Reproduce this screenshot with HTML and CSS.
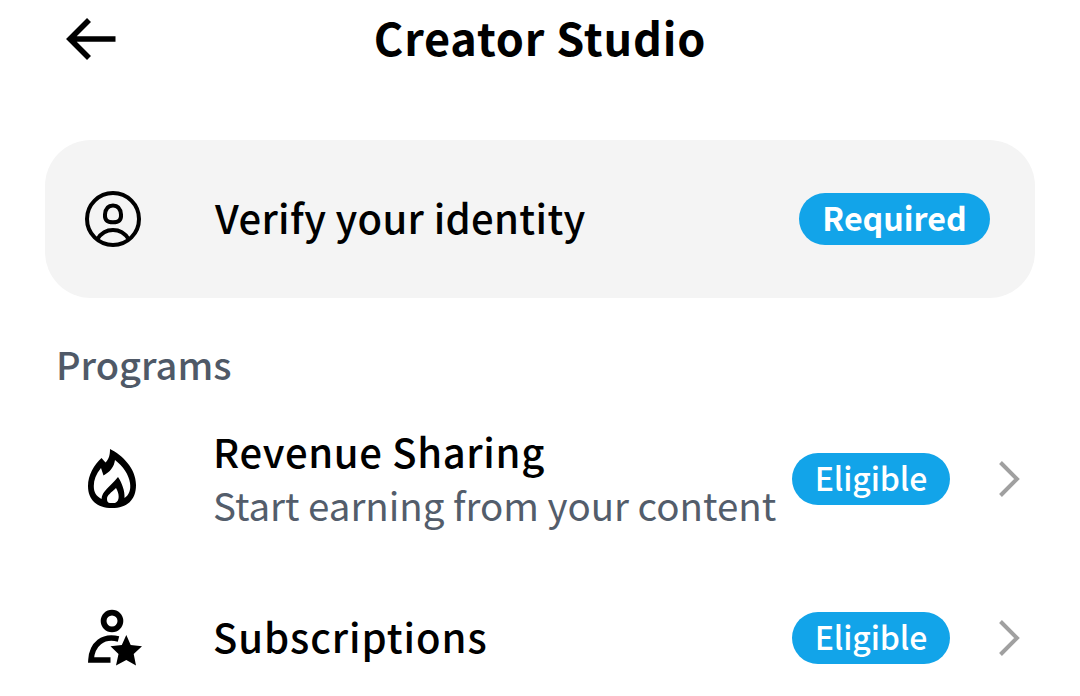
FILE: index.html
```
<!DOCTYPE html>
<html lang="en">
<head>
  <meta charset="UTF-8">
  <title>Creator Studio</title>
  <link rel="stylesheet" href="styles.css">
</head>
<body>
  <header class="topbar">
    <svg class="back" viewBox="0 0 52 44" width="52" height="44">
      <path d="M24 3 L5 22 L24 41 M5 22 H50.500" fill="none" stroke="#000" stroke-width="5.600"/>
    </svg>
    <h1>Creator Studio</h1>
  </header>

  <section class="card">
    <svg class="icon" viewBox="0 0 60 60" width="60" height="60">
      <circle cx="30" cy="30" r="26" fill="none" stroke="#000" stroke-width="4"/>
      <path d="M30 16.500 C35.500 16.500 37.500 20 38 25.500 C38.400 31 36 33.300 30 33.300 C24 33.300 21.600 31 22 25.500 C22.500 20 24.500 16.500 30 16.500 Z M14.500 50 C22 38 38 38 45.500 50" fill="none" stroke="#000" stroke-width="4"/>
    </svg>
    <span class="name">Verify your identity</span>
    <span class="badge required">Required</span>
  </section>

  <h2>Programs</h2>

  <div class="row revenue">
    <svg class="icon" viewBox="0 0 60 60" width="60" height="60">
      <path fill-rule="evenodd" d="M27 0 C39 6 53 19 53 36 C53 51 44 59 29 59 C14 59 5 51 5 37 C5 26 11 16 18.500 9 L22.500 13.500 C26 10 27 6 27 0 Z M32 11 C31 18 27 23 20.500 26.500 L18 19 C13 25 10.800 31 10.800 37 C10.800 43 13 47 18.500 50 C19 42 27 38 35 28 C39 34 42 42 41.500 49 C46 46 48 41 47 34 C46 26 40 17 32 11 Z M33 39 C28 44 24 46 24 50 C24 52.500 25 54 27 54 H32 C37 52 36.500 45 33 39 Z"/>
    </svg>
    <div class="label">
      <span class="name">Revenue Sharing</span>
      <span class="hint">Start earning from your content</span>
    </div>
    <span class="badge eligible">Eligible</span>
    <svg class="chevron" viewBox="0 0 24 38" width="24" height="38">
      <path d="M2.500 2.500 L19 19 L2.500 35.500" fill="none" stroke="#a0a0a0" stroke-width="4"/>
    </svg>
  </div>

  <div class="row">
    <svg class="icon" viewBox="0 0 60 60" width="60" height="60">
      <circle cx="29" cy="13" r="8.400" fill="none" stroke="#000" stroke-width="5.800"/>
      <path d="M35.500 31 C20 27 9 36 8 52 H27.500" fill="none" stroke="#000" stroke-width="5.600"/>
      <path d="M43.300 27 L47.700 37 L59 38.300 L50.700 46 L53 57.500 L43.300 52 L33 57.500 L35.500 46 L27.500 38.300 L38.800 37 Z"/>
    </svg>
    <span class="name subscriptions">Subscriptions</span>
    <span class="badge eligible">Eligible</span>
    <svg class="chevron" viewBox="0 0 24 38" width="24" height="38">
      <path d="M2.500 2.500 L19 19 L2.500 35.500" fill="none" stroke="#a0a0a0" stroke-width="4"/>
    </svg>
  </div>
</body>
</html>
```

FILE: styles.css
```
* {
  box-sizing: border-box;
}
body {
  margin: 0;
  width: 1080px;
  height: 696px;
  overflow: hidden;
  background: #fff;
  color: #000;
  font-family: "Noto Sans CJK SC", sans-serif;
  font-weight: 500;
}
.topbar {
  display: grid;
  grid-template-columns: 100px 1fr 100px;
  align-items: center;
  height: 78px;
  padding: 0 65px;
}
h1 {
  margin: 0;
  padding-bottom: 4px;
  font-size: 45px;
  line-height: 72px;
  font-weight: 700;
  letter-spacing: 0.8px;
  text-align: center;
  white-space: nowrap;
}
.card {
  display: flex;
  align-items: center;
  height: 158px;
  margin: 62px 45px 0;
  padding: 0 45px 0 38px;
  border-radius: 46px;
  background: #f4f4f4;
}
.icon {
  flex: none;
  margin-right: 72px;
  overflow: visible;
}
.row .icon {
  margin-right: 70px;
}
.name {
  flex: 1;
  padding-bottom: 4px;
  font-size: 40px;
  line-height: 54px;
  letter-spacing: 0.35px;
  white-space: nowrap;
}
.badge {
  flex: none;
  height: 52px;
  border-radius: 26px;
  background: #12a4e9;
  color: #fff;
  font-size: 32.5px;
  line-height: 48px;
  text-align: center;
  white-space: nowrap;
}
.required {
  width: 191px;
  font-size: 32.2px;
  font-weight: 700;
}
.eligible {
  width: 158px;
  font-size: 32px;
  letter-spacing: -0.1px;
}
h2 {
  height: 54px;
  margin: 39px 0 0 56px;
  color: #4f5967;
  font-size: 38px;
  line-height: 54px;
  font-weight: 500;
}
.row {
  display: flex;
  align-items: center;
  height: 159px;
  padding: 0 58px 0 83px;
}
.revenue {
  margin-top: 8px;
}
.label {
  display: flex;
  flex: 1;
  flex-direction: column;
  padding-bottom: 2px;
}
.label .name {
  padding: 0;
  line-height: 53px;
  letter-spacing: 0.65px;
}
.subscriptions {
  letter-spacing: 0.95px;
}
.hint {
  color: #535d6b;
  font-size: 38.5px;
  line-height: 52px;
  font-weight: 400;
  letter-spacing: -0.03px;
  white-space: nowrap;
}
.chevron {
  flex: none;
  margin-left: 48px;
}
```
